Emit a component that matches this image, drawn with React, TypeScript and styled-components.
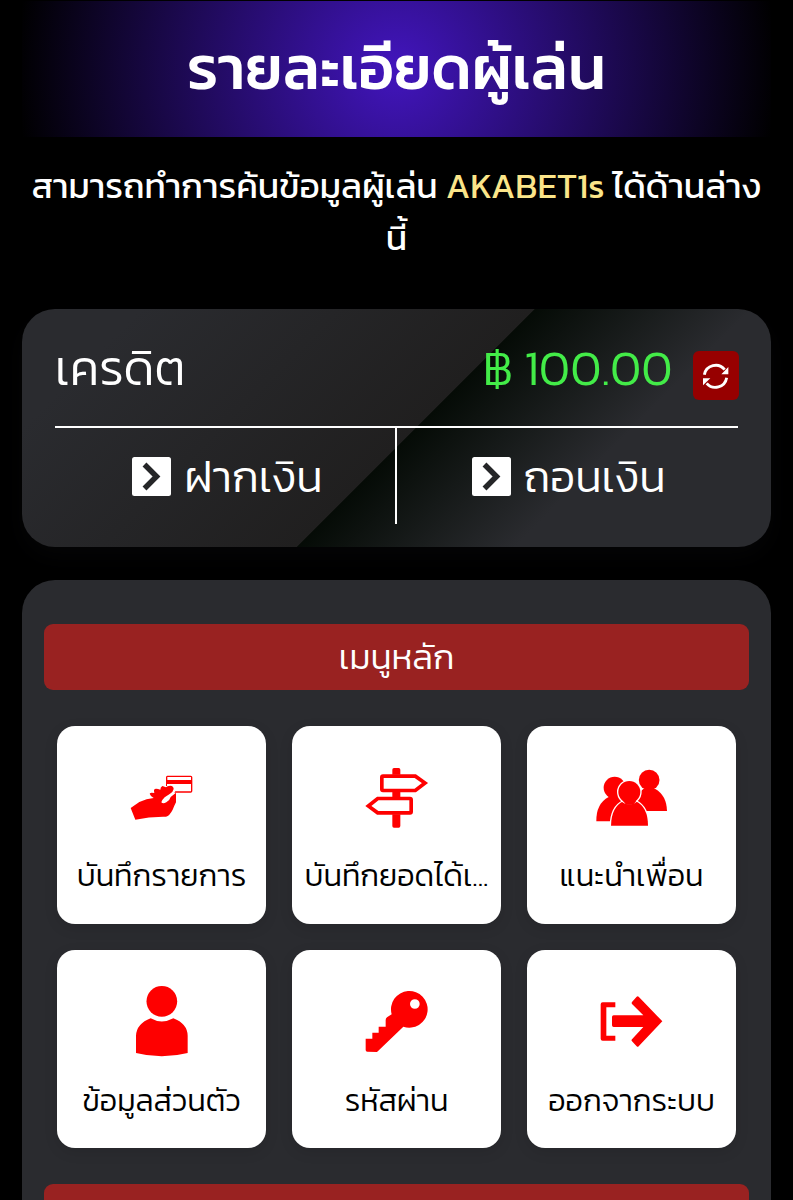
import React from "react";
import styled, { createGlobalStyle } from "styled-components";

const Global = createGlobalStyle`
  body { margin: 0; background: #000; overflow: hidden; }
  * { box-sizing: border-box; }
`;

const Page = styled.main`
  height: 1200px;
  padding: 1px 22px 0;
  overflow: hidden;
  background: #000;
  color: #fff;
  font-family: Kanit, Prompt, "Noto Sans Thai", "Noto Sans", sans-serif;
  font-weight: 300;
`;

const Hero = styled.header`
  height: 136px;
  padding-bottom: 4px;
  display: flex;
  align-items: center;
  justify-content: center;
  background: radial-gradient(circle, #4215bd 0%, #000 100%);
`;

const Line = styled.span<{ $size: number; $weight?: number; $color?: string }>`
  font-size: ${(p) => p.$size}px;
  font-weight: ${(p) => p.$weight ?? 300};
  color: ${(p) => p.$color ?? "inherit"};
  white-space: nowrap;
`;

const Intro = styled.p`
  height: 105px;
  margin: 23px -10px 44px;
  font-size: 35.2px;
  font-weight: 400;
  line-height: 51.500px;
  text-align: center;
`;

const Gold = styled.b`
  color: #fbe589;
  font-weight: 400;
`;

const Wallet = styled.section`
  height: 238px;
  padding: 33px 33px 0;
  border-radius: 33px;
  background: linear-gradient(135deg, #2a2b2f 0%, #2a2b2f 12%, #201f1f 51.9%, #050b06 52%, #2a2b2f 74%);
  box-shadow: 0 10px 24px rgba(42, 43, 47, 0.12);
`;

const Balance = styled.div`
  height: 86px;
  display: flex;
  align-items: flex-start;
  justify-content: space-between;
  border-bottom: 2px solid #fff;
  line-height: 53px;
`;

const Amount = styled.div`
  display: flex;
  gap: 20px;
`;

const Refresh = styled.button`
  width: 46px;
  height: 49px;
  margin: 9px -0.5px 0 0;
  padding: 0;
  display: grid;
  place-items: center;
  border: 0;
  border-radius: 6px;
  background: #970000;
`;

const Actions = styled.div`
  display: grid;
  grid-template-columns: 342px 1fr;
`;

const Action = styled.div`
  height: 96px;
  padding-left: 4px;
  display: flex;
  align-items: center;
  justify-content: center;
  gap: 13px;
  &:first-child { padding-left: 5px; border-right: 2px solid #fff; }
  &:last-child { padding-left: 2px; }
`;

const Panel = styled.section`
  height: 800px;
  margin-top: 33px;
  padding: 44px 22px 0;
  border-radius: 33px;
  background: #2a2b2f;
`;

const Banner = styled.h2`
  height: 66px;
  margin: 0;
  padding-bottom: 2px;
  display: flex;
  align-items: center;
  justify-content: center;
  border-radius: 9px;
  background: #992221;
`;

const Tiles = styled.div`
  display: grid;
  grid-template-columns: repeat(3, 209px);
  column-gap: 26px;
  row-gap: 26.5px;
  padding: 35.5px 13px 36px;
`;

const Tile = styled.div`
  height: 198px;
  padding-top: 33px;
  display: flex;
  flex-direction: column;
  align-items: center;
  border-radius: 18px;
  background: #fff;
  color: #000;
  box-shadow: 0 4px 14px rgba(0, 0, 0, 0.1);
`;

const Label = styled.div`
  height: 50px;
  margin-top: 16.5px;
  line-height: 50px;
`;

const Icon = ({ children }: { children: React.ReactNode }) => (
  <svg width="75" height="75" viewBox="222 115 225 225" fill="#fe0000">{children}</svg>
);

const HandCard = () => (
  <Icon>
    <path fillRule="evenodd" d="M352 165H422Q427 165 427 170V211Q427 216 422 216H373L376 212H423V190H351V196H348V170Q348 165 352 165ZM352 169V178H423V169Z" />
    <path d="M242 262L268 244Q290 234 311 232Q301 226 299 219Q301 214 313 217Q310 208 314 205Q320 203 331 207Q331 199 337 196L348 200Q351 195 361 195Q371 196 371 205Q370 213 359 220L344 230Q335 239 334 245Q339 251 349 245Q359 240 362 229L378 216V245Q373 255 368 267Q359 285 348 288Q300 287 256 297Z" />
  </Icon>
);

const Signpost = () => (
  <Icon>
    <path d="M322 162V147Q322 142 327 142H341Q346 142 346 147V162ZM322 214H346V230H322ZM322 281H346V316Q346 321 341 321H327Q322 321 322 316Z" />
    <path d="M294 166.500H391L420 187L391 209.500H294Q290.500 209.500 290.500 206V170Q290.500 166.500 294 166.500ZM375 233.500H278L250 256L278 276.500H375Q378.500 276.500 378.500 273V237Q378.500 233.500 375 233.500Z" fill="none" stroke="#fe0000" strokeWidth="11" />
  </Icon>
);

const Friends = () => (
  <Icon>
    <circle cx="387.500" cy="178" r="31" />
    <path d="M338 271Q341 223 371 204H405Q440 224 441 271Z" />
    <circle cx="284" cy="201" r="33" />
    <path d="M229 302Q228 249 266 229H302Q325 245 330 302Z" />
    <g stroke="#fff" strokeWidth="8" paintOrder="stroke">
      <path d="M273 315Q274 259 310 242L325 236H332L348 242Q384 260 384 315Z" />
      <circle cx="328" cy="214" r="33" />
    </g>
    <path d="M310 242L318 230H338L348 242L340 252H318Z" />
  </Icon>
);

const Person = () => (
  <Icon>
    <circle cx="335.500" cy="170" r="46" />
    <path d="M302 221Q335 240 370 221Q412 237 413 273V325Q335 345 258 325V273Q260 237 302 221Z" />
  </Icon>
);

const Key = () => (
  <Icon>
    <path fillRule="evenodd" d="M320 209A55 55 0 1 1 355 246L276 322L247 321Q242 321 242 316V282H262V264H281V246H302V226Q302 221 306 218ZM404 178A14.500 14.500 0 1 0 375 178A14.500 14.500 0 1 0 404 178Z" />
  </Icon>
);

const Exit = () => (
  <Icon>
    <path d="M286 173V188H259V273H286V288H248Q242 288 242 282V179Q242 173 248 173Z" />
    <path d="M281 212H370L336 178Q334 175 336 172L350 156Q353 153 356 156L427 230L356 305Q353 308 350 305L336 290Q333 287 336 284L370 247H281Q276 247 276 242V217Q276 212 281 212Z" />
  </Icon>
);

const RefreshIcon = () => (
  <svg width="28" height="28" viewBox="784 92 84 84" fill="none">
    <path d="M791 130A34.500 34.500 0 0 1 852 115" stroke="#fff" strokeWidth="8.500" />
    <path d="M858 139A34.500 34.500 0 0 1 798 156" stroke="#fff" strokeWidth="8.500" />
    <path d="M863 107V129H842ZM787 141H809L787 162Z" fill="#fff" />
  </svg>
);

const ChevronBox = () => (
  <svg width="39" height="39" viewBox="0 0 39 39">
    <rect width="39" height="39" rx="2.500" fill="#fff" />
    <path d="M12.500 7.500L24.500 19.500L12.500 31.500" fill="none" stroke="#252628" strokeWidth="5.500" />
  </svg>
);

const items = [
  { text: "บันทึกรายการ", icon: <HandCard /> },
  { text: "บันทึกยอดได้เ...", icon: <Signpost /> },
  { text: "แนะนำเพื่อน", icon: <Friends /> },
  { text: "ข้อมูลส่วนตัว", icon: <Person /> },
  { text: "รหัสผ่าน", icon: <Key /> },
  { text: "ออกจากระบบ", icon: <Exit /> },
];

export default function App() {
  return (
    <Page>
      <Global />
      <Hero><Line as="h1" $size={61.6} $weight={500}>รายละเอียดผู้เล่น</Line></Hero>
      <Intro>
        สามารถทำการค้นข้อมูลผู้เล่น <Gold>AKABET1s</Gold> ได้ด้านล่าง
        <br />
        นี้
      </Intro>
      <Wallet>
        <Balance>
          <Line $size={48.4}>เครดิต</Line>
          <Amount>
            <Line $size={48.4} $color="#43ec48">฿ 100.00</Line>
            <Refresh aria-label="refresh"><RefreshIcon /></Refresh>
          </Amount>
        </Balance>
        <Actions>
          <Action><ChevronBox /><Line $size={44}>ฝากเงิน</Line></Action>
          <Action><ChevronBox /><Line $size={44}>ถอนเงิน</Line></Action>
        </Actions>
      </Wallet>
      <Panel>
        <Banner><Line $size={35.2}>เมนูหลัก</Line></Banner>
        <Tiles>
          {items.map((item) => (
            <Tile key={item.text}>
              {item.icon}
              <Label><Line $size={30.8}>{item.text}</Line></Label>
            </Tile>
          ))}
        </Tiles>
        <Banner />
      </Panel>
    </Page>
  );
}
